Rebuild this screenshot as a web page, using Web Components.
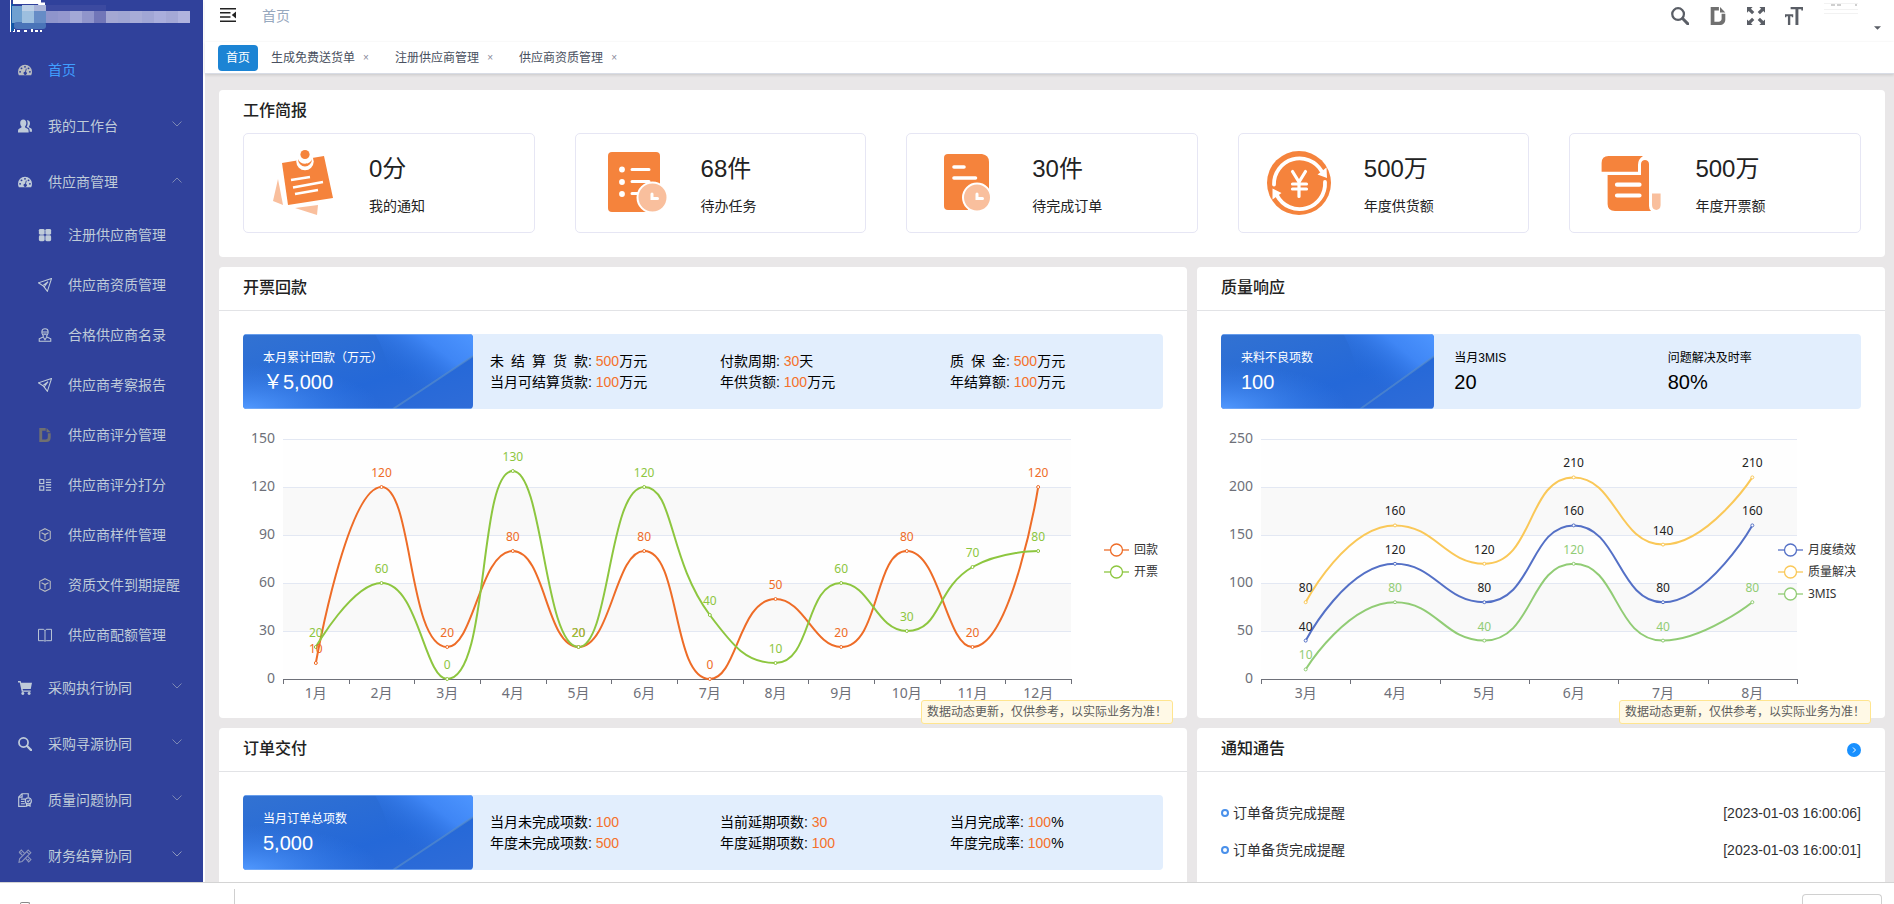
<!DOCTYPE html>
<html lang="zh-CN">
<head>
<meta charset="utf-8">
<title>首页</title>
<style>
  html, body { height: 100%; margin: 0; }
  body { font: 14px/20px "Liberation Sans", "Noto Sans CJK SC", sans-serif; color: #303133; overflow: hidden; }
</style>
</head>
<body>
<app-shell>
  <app-sidebar slot="side"></app-sidebar>
  <app-header slot="top"></app-header>
  <tag-bar slot="top"></tag-bar>

  <dash-card heading="工作简报" plain>
    <stat-grid>
      <stat-card icon="note" value="0分" label="我的通知"></stat-card>
      <stat-card icon="task" value="68件" label="待办任务"></stat-card>
      <stat-card icon="order" value="30件" label="待完成订单"></stat-card>
      <stat-card icon="coin" value="500万" label="年度供货额"></stat-card>
      <stat-card icon="bill" value="500万" label="年度开票额"></stat-card>
    </stat-grid>
  </dash-card>

  <dash-row>
    <dash-card heading="开票回款">
      <kpi-banner>
        <kpi-lead label="本月累计回款（万元）" value="￥5,000"></kpi-lead>
        <kpi-cell>
          <kpi-line label="未&#8194;结&#8194;算&#8194;货&#8194;款" value="500" unit="万元"></kpi-line>
          <kpi-line label="当月可结算货款" value="100" unit="万元"></kpi-line>
        </kpi-cell>
        <kpi-cell>
          <kpi-line label="付款周期" value="30" unit="天"></kpi-line>
          <kpi-line label="年供货额" value="100" unit="万元"></kpi-line>
        </kpi-cell>
        <kpi-cell>
          <kpi-line label="质&#8194;保&#8194;金" value="500" unit="万元"></kpi-line>
          <kpi-line label="年结算额" value="100" unit="万元"></kpi-line>
        </kpi-cell>
      </kpi-banner>
      <line-chart data-set="invoice"></line-chart>
      <hint-tag slot="hint">数据动态更新，仅供参考，以实际业务为准！</hint-tag>
    </dash-card>
    <dash-card heading="质量响应">
      <kpi-banner>
        <kpi-lead label="来料不良项数" value="100"></kpi-lead>
        <kpi-lead plain label="当月3MIS" value="20"></kpi-lead>
        <kpi-lead plain label="问题解决及时率" value="80%"></kpi-lead>
      </kpi-banner>
      <line-chart data-set="quality"></line-chart>
      <hint-tag slot="hint">数据动态更新，仅供参考，以实际业务为准！</hint-tag>
    </dash-card>
  </dash-row>

  <dash-row>
    <dash-card heading="订单交付">
      <kpi-banner>
        <kpi-lead label="当月订单总项数" value="5,000"></kpi-lead>
        <kpi-cell>
          <kpi-line label="当月未完成项数" value="100"></kpi-line>
          <kpi-line label="年度未完成项数" value="500"></kpi-line>
        </kpi-cell>
        <kpi-cell>
          <kpi-line label="当前延期项数" value="30"></kpi-line>
          <kpi-line label="年度延期项数" value="100"></kpi-line>
        </kpi-cell>
        <kpi-cell>
          <kpi-line label="当月完成率" value="100" unit="%"></kpi-line>
          <kpi-line label="年度完成率" value="100" unit="%"></kpi-line>
        </kpi-cell>
      </kpi-banner>
    </dash-card>
    <dash-card heading="通知通告" more>
      <notice-list>
        <notice-item time="2023-01-03 16:00:06">订单备货完成提醒</notice-item>
        <notice-item time="2023-01-03 16:00:01">订单备货完成提醒</notice-item>
      </notice-list>
    </dash-card>
  </dash-row>

  <app-footer slot="bottom"></app-footer>
</app-shell>

<script>
const define = (name, render, setup) => {
  customElements.define(name, class extends HTMLElement {
    connectedCallback() {
      if (this.shadowRoot) return;
      this.attachShadow({ mode: 'open' }).innerHTML = render(this);
      if (setup) setup(this);
    }
  });
};
const attr = (el, name) => el.getAttribute(name) || '';

/* Icon set. Each drawing uses currentColor. */
const ICONS = {
  dash: ['0 0 16 16', '<path fill="currentColor" fill-rule="evenodd" d="M8 2a8 8 0 0 0-8 8c0 1.500.4 2.900 1 4h14a8 8 0 0 0 1-4 8 8 0 0 0-8-8zM8 3.300a1.100 1.100 0 1 1 0 2.200 1.100 1.100 0 0 1 0-2.200zM4 5a1.100 1.100 0 1 1 0 2.200A1.100 1.100 0 0 1 4 5zm8 0a1.100 1.100 0 1 1 0 2.200A1.100 1.100 0 0 1 12 5zM2.400 9a1.100 1.100 0 1 1 0 2.200 1.100 1.100 0 0 1 0-2.200zm11.200 0a1.100 1.100 0 1 1 0 2.200 1.100 1.100 0 0 1 0-2.200zM9 6.400l1 .3-.9 3.500a1.800 1.800 0 1 1-1-.2z"/>'],
  people: ['0 0 16 16', '<path fill="currentColor" d="M6 0.500c2.200 0 3.500 1.600 3.500 4 0 1.700-.6 3-1.400 3.900v1.200L11 11c1 .6 1.200 1.300 1.200 4.500H0c0-3.200.2-3.900 1.200-4.500l2.700-1.400V8.400C3 7.500 2.500 6.200 2.500 4.500c0-2.400 1.300-4 3.500-4z"/><path fill="currentColor" d="M10 1.400c2.300-.3 3.700 1.200 3.700 3.500 0 1.500-.5 2.800-1.300 3.600v.9l2.400 1.200c1 .5 1.200 1.200 1.200 4h-2.600c0-2.800-.4-3.800-1.800-4.600L9.800 9c.8-1 1.200-2.500 1.200-4.300 0-1.300-.3-2.400-1-3.300z"/>'],
  grid: ['0 0 16 16', '<g fill="currentColor"><rect x="1" y="1" width="6.600" height="6.600" rx="1.700"/><rect x="8.400" y="1" width="6.600" height="6.600" rx="1.700"/><rect x="1" y="8.400" width="6.600" height="6.600" rx="1.700"/><rect x="8.400" y="8.400" width="6.600" height="6.600" rx="1.700"/></g>'],
  plane: ['0 0 16 16', '<path fill="none" stroke="currentColor" stroke-width="1.200" d="M15.500.5L.5 5.500l5 3.200 6-4.500-4.500 6 3.700 5z M5.500 8.700l1.500 1.500"/>'],
  badge: ['0 0 16 16', '<g fill="none" stroke="currentColor" stroke-width="1.200"><path d="M4.500 3.600C4.500 1.800 6 .8 8 .8s3.500 1 3.500 2.800v2.300L10 8.800v1.400l4.600 2.200v2.800H1.400v-2.800L6 10.200V8.800L4.500 5.900z"/><path d="M4.500 4.500h7M6.200 10.500L8 13.500l1.800-3M6 7h4"/></g>'],
  dee: ['0 0 16 16', '<path fill="currentColor" fill-rule="evenodd" d="M1.500 0h7.300v3H4.800v10h3.700c1.700 0 2.700-.8 2.700-2.500V6h3.300v5c0 3-2 5-5 5h-8z"/><path fill="currentColor" d="M9.800 0l4.700 4.900H9.800z"/>'],
  list: ['0 0 16 16', '<g fill="none" stroke="currentColor" stroke-width="1.300"><rect x="2" y="1.700" width="4.600" height="4.600"/><rect x="2" y="9.300" width="4.600" height="4.600"/><path d="M9 2h6M9 5h6M9 7.800h6M9 10.800h6M9 13.800h6"/></g>'],
  cube: ['0 0 16 16', '<path fill="none" stroke="currentColor" stroke-width="1.200" d="M8 .8l6 3v8.400l-6 3-6-3V3.800zM4 5.500l4 2 4-2M8 7.500v5"/>'],
  book: ['0 0 16 16', '<path fill="none" stroke="currentColor" stroke-width="1.100" d="M.6 1.500h5.900L8 3l1.500-1.500h5.900v13H9.500L8 15l-1.500-.5H.6zM8 2.500v12"/>'],
  cart: ['0 0 16 16', '<path fill="currentColor" d="M0 0h3l.6 2H16l-1.400 7.200H5.300l.4 1.600h8.800v1.400H4.300L2 1.600H0z"/><circle cx="5.500" cy="14.300" r="1.700" fill="currentColor"/><circle cx="12.700" cy="14.300" r="1.700" fill="currentColor"/>'],
  search: ['0 0 16 16', '<circle cx="6.300" cy="6.300" r="5.200" fill="none" stroke="currentColor" stroke-width="2"/><path d="M10.300 10.300L15 15" stroke="currentColor" stroke-width="2.600" stroke-linecap="round"/>'],
  check: ['0 0 16 16', '<g fill="none" stroke="currentColor" stroke-width="1.300"><path d="M9 15.300H.8V4.500L4.500.8h7.200v4M4.700 1v3.700H1M3.300 7h5M3.300 9.700h4M3.300 12.300h4.500"/><circle cx="11.800" cy="9" r="3.500"/><path d="M10.300 8.700l1.300 1.400 2-2.400M9.800 12v3l2-1 2 1v-3"/></g>'],
  tools: ['0 0 16 16', '<g fill="none" stroke="currentColor" stroke-width="1.200"><path d="M11.700 1.200l3 3L4.700 14.200l-3.600.9.700-3.900zM10 3l3 3M1.200 3.800L3.800 1.200l3.400 3.400M4 3.800l-1 1M4.800 7L1.200 3.800M9 11l3.200 3.700 2.600-2.600L11.300 8.700M11.300 12.600l1-1"/></g>'],
  fold: ['0 0 16 16', '<path fill="currentColor" d="M0 1h16v1.600H0zM0 5h10.500v1.600H0zM0 9.200h10.500v1.600H0zM0 13.400h16V15H0zM16 4.600v6.800L11.800 8z"/>'],
  full: ['0 0 16 16', '<path fill="currentColor" d="M0 0h5L3.500 1.500l3 3-2 2-3-3L0 5zM16 0v5l-1.500-1.500-3 3-2-2 3-3L11 0zM0 16v-5l1.500 1.500 3-3 2 2-3 3L5 16zM16 16h-5l1.500-1.500-3-3 2-2 3 3L16 11z"/>'],
  size: ['0 0 16 16', '<path fill="currentColor" d="M5 0h11v3h-1.500V2h-2.600v14H9.300V2H5zM0 6.500h7.300V9H6V8.300H4.700V16H2.600V8.300H1.200V9H0z"/>'],
  down: ['0 0 10 6', '<path fill="none" stroke="currentColor" d="M.5.5L5 5 9.500.5"/>'],
  up: ['0 0 10 6', '<path fill="none" stroke="currentColor" d="M.5 5.500L5 1l4.500 4.500"/>'],
  caret: ['0 0 8 4', '<path fill="currentColor" d="M0 0h8L4 4z"/>'],
  note: ['0 0 80 80', '<g fill="#f9bf9d"><path d="M14 36L9 58l10 4z"/><path d="M31 65l23-3-1 10z"/></g><path fill="#f5833c" d="M18 20l42-7 9 42-45 7z"/><circle cx="41" cy="18.500" r="8.700" fill="#fff"/><path fill="#f5833c" d="M34 16a7 7.500 0 0 0 14 0c-1.500 6-12 6.500-14 0z"/><circle cx="41" cy="11.500" r="4.600" fill="#f5833c"/><path d="M27 37l19-3M29 44.500L59 39M31 51l23-4" stroke="#fff" stroke-width="2.600"/>'],
  task: ['0 0 80 80', '<rect x="12" y="9" width="52" height="60" rx="4" fill="#f5833c"/><g fill="#fff"><circle cx="26" cy="26.500" r="2.900"/><circle cx="26" cy="39" r="2.900"/><circle cx="26" cy="51" r="2.900"/></g><path d="M36 26.500h17M36 38.500h17M36 50.500h8" stroke="#fff" stroke-width="3" stroke-linecap="round"/><circle cx="56.500" cy="54.500" r="15" fill="#f9bf9d" stroke="#fff" stroke-width="2"/><path d="M56 51v4.500h5.500" fill="none" stroke="#fff" stroke-width="3" stroke-linecap="round"/>'],
  order: ['0 0 80 80', '<path fill="#f5833c" d="M21 11h34q7 1 7 8v48H21q-4 0-4-4V15q0-4 4-4z"/><path d="M27 24h10M27 35h21.500" stroke="#fff" stroke-width="3.600" stroke-linecap="round"/><path fill="#fff" d="M50 54h14v14H40z"/><circle cx="50" cy="54.500" r="14" fill="#f9bf9d" stroke="#fff" stroke-width="2"/><path d="M50 51v4.500h5.500" fill="none" stroke="#fff" stroke-width="3" stroke-linecap="round"/>'],
  coin: ['0 0 80 80', '<circle cx="40" cy="40" r="32" fill="#f5833c"/><g fill="none" stroke="#fff" stroke-width="3.800" stroke-linecap="round"><path d="M15 41.500A25.500 25.500 0 0 1 62.500 28M66 39A25.500 25.500 0 0 1 18 52.500"/></g><path fill="#fff" d="M67.500 24.500l.5 10.500-9.500-3.500zM13.500 56.500V45.500l9 4.500z"/><path d="M33.500 28.500L40 39l6.500-10.500M40 39v14.500M33.500 41h14M33.500 46h14" fill="none" stroke="#fff" stroke-width="3.200" stroke-linecap="round"/>'],
  bill: ['0 0 80 80', '<path fill="#f5833c" d="M11.600 28.700V20q0-7 7-7H53q-5 3-5 9v6.700z"/><path fill="#f5833c" d="M17.600 32H51V21c0-5.500 8-5.500 8 0v42q0 3 2 5H25q-7.400 0-7.400-7z"/><path d="M27 41.700h22.500M27 52.500h22.500" stroke="#fff" stroke-width="4.200" stroke-linecap="round"/><path fill="#f9bf9d" d="M62 50.500h8.600V62c0 6.500-8.600 6.500-8.600 0z"/>']
};
const icon = (name, w, h = w) =>
  `<svg width="${w}" height="${h}" viewBox="${ICONS[name][0]}" aria-hidden="true">${ICONS[name][1]}</svg>`;

define('app-shell', () => `
  <style>
    :host { display: flex; flex-direction: column; height: 100vh; }
    .work { flex: 1; min-height: 0; display: flex; overflow: hidden; }
    .page { flex: 1; min-width: 0; display: flex; flex-direction: column; margin-left: 2px; }
    main { flex: 1; min-height: 0; overflow: hidden; background: #e9e7e8; padding: 16px 9px 0 14px; display: flex; flex-direction: column; gap: 10px; }
  </style>
  <div class="work">
    <slot name="side"></slot>
    <div class="page"><slot name="top"></slot><main><slot></slot></main></div>
  </div>
  <slot name="bottom"></slot>`);

define('app-sidebar', () => {
  const tones = ['#8f95cc', '#9498ce', '#a3a8d6', '#9095cb', '#7176b8', '#a4a8d3', '#a0a6d3', '#a8acd7', '#a1a6d5', '#aaaedc', '#a4a8d6', '#b0b3de'];
  const mosaic = tones.map((c, i) => `<rect x="${46 + i * 12}" y="11" width="12" height="12" fill="${c}"/>`).join('');
  return `
  <style>
    :host { display: flex; flex-direction: column; flex: none; width: 203px; background: #30419b; overflow: hidden; }
    .logo { display: block; flex: none; height: 42px; }
    nav { display: flex; flex: none; flex-direction: column; }
  </style>
  <svg class="logo" width="203" height="42" viewBox="0 0 203 42" role="img" aria-label="logo">
    <path fill="#fff" d="M10 0h1v32h-1zM13 0h28v4H13zM13 29h2v3h-2zM17 30h3v2h-3zM24 30h3v2h-3zM31 29h2v3h-2zM35 30h3v2h-3zM40 30h2v2h-2z"/>
    <rect x="11" y="4" width="3" height="27" fill="#1257a6"/>
    <rect x="12" y="6" width="10" height="17" fill="#6fa0d0"/><rect x="14" y="22" width="32" height="7" rx="3" fill="#4a74b8"/>
    <rect x="22" y="5" width="12" height="7" fill="#bdd0e6"/><rect x="22" y="11" width="12" height="12" fill="#9dbfdf"/>
    <rect x="34" y="5" width="12" height="6" fill="#a9b4d8"/><rect x="34" y="11" width="12" height="12" fill="#668cc6"/>
    <path fill="#fff" d="M38 5q0-3 3-2.500h4V5z"/>
    <rect x="46" y="5" width="60" height="6" fill="#3c4aa0"/>
    ${mosaic}
  </svg>
  <nav>
    <nav-item icon="dash" active>首页</nav-item>
    <nav-item icon="people" arrow="down">我的工作台</nav-item>
    <nav-item icon="dash" arrow="up">供应商管理</nav-item>
    <nav-item sub icon="grid">注册供应商管理</nav-item>
    <nav-item sub icon="plane">供应商资质管理</nav-item>
    <nav-item sub icon="badge">合格供应商名录</nav-item>
    <nav-item sub icon="plane">供应商考察报告</nav-item>
    <nav-item sub icon="dee">供应商评分管理</nav-item>
    <nav-item sub icon="list">供应商评分打分</nav-item>
    <nav-item sub icon="cube">供应商样件管理</nav-item>
    <nav-item sub icon="cube">资质文件到期提醒</nav-item>
    <nav-item sub icon="book">供应商配额管理</nav-item>
    <nav-item icon="cart" arrow="down">采购执行协同</nav-item>
    <nav-item icon="search" arrow="down">采购寻源协同</nav-item>
    <nav-item icon="check" arrow="down">质量问题协同</nav-item>
    <nav-item icon="tools" arrow="down">财务结算协同</nav-item>
  </nav>`;
});

define('nav-item', el => {
  const arrow = attr(el, 'arrow');
  const inner = `${icon(attr(el, 'icon'), 14)}<span><slot></slot></span>${arrow ? icon(arrow, 10, 6) : ''}`;
  return `
  <style>
    :host { display: block; }
    a, button { box-sizing: border-box; display: flex; align-items: center; gap: 16px; width: 100%; height: 56px; padding: 0 21px 0 18px; border: 0; background: none; font: inherit; line-height: 20px; text-align: left; text-decoration: none; color: #bfcbd9; cursor: pointer; }
    :host([sub]) a { height: 50px; padding-left: 38px; }
    :host([active]) span { color: #409eff; }
    :host([active]) svg, :host([icon="cube"]) svg { color: #b9bcc0; }
    :host([icon="dee"]) svg { color: #707070; }
    :host([icon="tools"]) svg { color: #8d97bd; }
    span { flex: 1; white-space: nowrap; }
    span + svg { color: #7c88b4; margin-bottom: 4px; }
  </style>
  ${arrow ? `<button type="button" aria-expanded="${arrow === 'up'}">${inner}</button>` : `<a href="#">${inner}</a>`}`;
});

define('app-header', () => `
  <style>
    :host { display: flex; align-items: center; flex: none; height: 28px; padding: 0 13px 14px 15px; background: #fff; box-shadow: 0 1px 4px rgba(0,21,41,.08); position: relative; }
    button { border: 0; padding: 0; background: none; display: flex; color: #5a5e66; cursor: pointer; }
    .fold { color: #222; margin-top: 2px; }
    nav { flex: 1; margin: 4px 0 0 26px; color: #97a8be; }
    .tools { display: flex; align-items: center; gap: 20px; padding-top: 4px; }
    .dee { color: #707070; }
    .user { gap: 15px; align-items: flex-end; }
    .user svg:last-child { margin-bottom: -1px; }
  </style>
  <button class="fold" type="button" aria-label="收起菜单">${icon('fold', 16)}</button>
  <nav>首页</nav>
  <div class="tools">
    <button type="button" aria-label="搜索">${icon('search', 18)}</button>
    <button type="button" class="dee" aria-label="文档">${icon('dee', 18)}</button>
    <button type="button" aria-label="全屏">${icon('full', 18)}</button>
    <button type="button" aria-label="字号">${icon('size', 18)}</button>
    <button type="button" class="user" aria-label="用户"><svg width="36" height="26" viewBox="0 0 36 26"><path stroke="#f2f2f2" d="M1 .5h34M1 6.500h34M1 10.500h34"/><path stroke="#cfcfcf" stroke-width="2" d="M8 2h4M14 2h4M32 2h2"/></svg>${icon('caret', 7, 4)}</button>
  </div>`);

define('tag-bar', () => {
  const tabs = ['生成免费送货单', '注册供应商管理', '供应商资质管理'];
  return `
  <style>
    :host { display: flex; align-items: center; flex: none; gap: 5px; height: 31px; padding-left: 13px; background: #fff; border-bottom: 1px solid #d8dce5; box-shadow: 0 1px 3px rgba(0,0,0,.14); font-size: 12px; position: relative; }
    div { display: flex; align-items: center; height: 26px; padding: 0 8px; border-radius: 4px; }
    a { color: #495060; text-decoration: none; }
    .on { background: #1c84d4; }
    .on a { color: #fff; }
    button { width: 16px; margin: 0 0 0 3px; padding: 0; border: 0; background: none; font: inherit; font-size: 10px; color: #889; cursor: pointer; }
  </style>
  <div class="on"><a href="#">首页</a></div>
  ${tabs.map(t => `<div><a href="#">${t}</a><button type="button" aria-label="关闭">×</button></div>`).join('')}`;
});

define('dash-row', () => `
  <style>
    :host { display: grid; flex: none; grid-template-columns: minmax(0, 121fr) minmax(0, 86fr); gap: 10px; }
  </style><slot></slot>`);

define('dash-card', el => `
  <style>
    :host { display: block; flex: none; position: relative; background: #fff; border-radius: 4px; }
    header { display: flex; align-items: center; justify-content: space-between; height: 43px; padding: 0 24px; border-bottom: 1px solid #e2e3e6; }
    h2 { margin: 0 0 1px; font-size: 16px; line-height: 24px; font-weight: 500; color: #222; }
    section { padding: 23px 24px 0; }
    :host([plain]) header { border-bottom: 0; }
    :host([plain]) section { padding: 0 24px 24px; }
    a { display: flex; width: 14px; height: 14px; border-radius: 50%; background: #1890ff; align-items: center; justify-content: center; }
  </style>
  <header><h2>${attr(el, 'heading')}</h2>${el.hasAttribute('more') ? '<a href="#" aria-label="更多"><svg width="6" height="6" viewBox="0 0 6 6"><path d="M2 .5L4.500 3 2 5.500" fill="none" stroke="#fff"/></svg></a>' : ''}</header>
  <section><slot></slot></section>
  <slot name="hint"></slot>`);

define('stat-grid', () => `
  <style>
    :host { display: grid; grid-template-columns: repeat(5, minmax(0, 1fr)); gap: 40px; }
  </style><slot></slot>`);

define('stat-card', el => `
  <style>
    :host { box-sizing: border-box; display: flex; align-items: center; gap: 25px; height: 100px; padding-left: 20px; border: 1px solid #e6e6f4; border-radius: 5px; }
    svg { flex: none; }
    div { display: flex; flex-direction: column; gap: 9px; padding-top: 5px; white-space: nowrap; }
    strong { font-size: 24px; line-height: 32px; font-weight: 400; color: #222; }
    span { line-height: 24px; color: #222; }
  </style>
  ${icon(attr(el, 'icon'), 80)}
  <div><strong>${attr(el, 'value')}</strong><span>${attr(el, 'label')}</span></div>`);

define('kpi-banner', () => `
  <style>
    :host { display: grid; grid-auto-flow: column; grid-auto-columns: minmax(0, 1fr); height: 75px; background: #e2eefd; border-radius: 4px; color: #000; }
  </style><slot></slot>`);

define('kpi-lead', el => `
  <style>
    :host { display: flex; flex-direction: column; justify-content: center; position: relative; overflow: hidden; padding: 0 0 3px 20px; border-radius: 4px; line-height: 24px; color: #fff; white-space: nowrap; }
    :host([plain]) { color: #000; }
    svg { position: absolute; inset: 0; width: 100%; height: 100%; z-index: 0; }
    span, strong { position: relative; }
    span { font-size: 12px; }
    strong { font-size: 20px; font-weight: 400; }
  </style>
  ${el.hasAttribute('plain') ? '' : `<svg viewBox="0 0 230 75" preserveAspectRatio="none" aria-hidden="true">
    <defs>
      <linearGradient id="a" x1="0" y1="0" x2="1" y2="1"><stop offset="0" stop-color="#3272d2"/><stop offset=".6" stop-color="#2468d8"/><stop offset="1" stop-color="#2f6cd8"/></linearGradient>
      <radialGradient id="b" cx="0" cy="1" r=".6"><stop offset="0" stop-color="#5199ff"/><stop offset="1" stop-color="#3b80ea" stop-opacity="0"/></radialGradient>
      <linearGradient id="c" x1="1" y1="0" x2=".3" y2=".7"><stop offset="0" stop-color="#4d95ff"/><stop offset=".4" stop-color="#3f86f5"/><stop offset="1" stop-color="#2468d8" stop-opacity="0"/></linearGradient>
    </defs>
    <path fill="url(#a)" d="M0 0h230v75H0z"/><path fill="url(#b)" d="M0 0h230v75H0z"/>
    <path fill="url(#c)" d="M132 0h98v22l-80 53q0-45-18-75z"/>
    <path stroke="#5b8fc8" stroke-opacity=".6" stroke-width="2" d="M150 75l80-53"/>
    <path fill="none" stroke="#7fb1f7" stroke-opacity=".7" d="M0 .5h230M0 74.500h230"/>
  </svg>`}
  <span>${attr(el, 'label')}</span><strong>${attr(el, 'value')}</strong>`);

define('kpi-cell', () => `
  <style>
    :host { display: flex; flex-direction: column; justify-content: center; padding-left: 17px; }
  </style><slot></slot>`);

define('kpi-line', el => `
  <style>
    :host { display: block; line-height: 21px; white-space: nowrap; }
    b { font-weight: 400; color: #f5702a; }
  </style>${attr(el, 'label')}: <b>${attr(el, 'value')}</b>${attr(el, 'unit')}`);

define('hint-tag', () => `
  <style>
    :host { position: absolute; right: 14px; bottom: -6px; box-sizing: border-box; height: 24px; padding: 0 0 0 5px; width: 252px; border: 1px solid #ffe58f; border-radius: 3px; background: #fff9e6; font-size: 12px; line-height: 22px; color: #5c5c5c; white-space: nowrap; z-index: 1; }
  </style><slot></slot>`);

define('notice-list', () => `
  <style>
    :host { display: flex; flex-direction: column; gap: 17px; padding: 8px 0 37px; }
  </style><slot></slot>`);

define('notice-item', el => `
  <style>
    :host { display: flex; align-items: center; line-height: 20px; }
    i { box-sizing: border-box; width: 8px; height: 8px; margin-right: 4px; border: 2px solid #4a90ea; border-radius: 50%; }
    a { flex: 1; color: #303133; text-decoration: none; }
  </style>
  <i></i><a href="#"><slot></slot></a><time>[${attr(el, 'time')}]</time>`);

define('app-footer', () => `
  <style>
    :host { display: flex; flex: none; align-items: flex-end; height: 21px; border-top: 1px solid #d4d4d4; background: #fff; overflow: hidden; }
    i { width: 8px; height: 1px; margin-left: 20px; border: 1px solid #888; border-bottom: 0; border-radius: 2px 2px 0 0; }
    b { width: 1px; height: 15px; margin-left: 204px; background: #cfcfcf; }
    button { box-sizing: border-box; width: 80px; height: 10px; margin: 0 12px 0 auto; border: 1px solid #d0d0d0; border-bottom: 0; border-radius: 4px 4px 0 0; background: #fff; }
  </style>
  <i></i><b></b><button type="button" aria-label="全部显示"></button>`);

/* Smoothed line charts, redrawn whenever their width changes. */
const DATASETS = {
  invoice: {
    max: 150, step: 30, right: 92, textWidth: 24,
    months: [1, 2, 3, 4, 5, 6, 7, 8, 9, 10, 11, 12],
    series: [
      { name: '回款', color: '#ee6c27', label: '#ee6c27', data: [10, 120, 20, 80, 20, 80, 0, 50, 20, 80, 20, 120] },
      { name: '开票', color: '#8dc63f', label: '#8dc63f', data: [20, 60, 0, 130, 20, 120, 40, 10, 60, 30, 70, 80] }
    ]
  },
  quality: {
    max: 250, step: 50, right: 64, textWidth: 48,
    months: [3, 4, 5, 6, 7, 8],
    series: [
      { name: '月度绩效', color: '#5470c6', label: '#222', data: [40, 120, 80, 160, 80, 160] },
      { name: '质量解决', color: '#fac858', label: '#222', data: [80, 160, 120, 210, 140, 210] },
      { name: '3MIS', color: '#91cc75', label: '#91cc75', data: [10, 80, 40, 120, 40, 80] }
    ]
  }
};

const clamp = (v, a, b) => Math.max(Math.min(a, b), Math.min(Math.max(a, b), v));
function smoothPath(pts) {
  let d = `M${pts[0][0]} ${pts[0][1]}`;
  let c0 = pts[0];
  for (let i = 1; i < pts.length; i++) {
    const p = pts[i], prev = pts[i - 1], next = pts[i + 1];
    let c1 = p, n0 = p;
    if (next) {
      const lp = Math.hypot(p[0] - prev[0], p[1] - prev[1]);
      const ln = Math.hypot(next[0] - p[0], next[1] - p[1]);
      const k = 0.5 * ln / (ln + lp);
      n0 = [0, 1].map(a => clamp(p[a] + (next[a] - prev[a]) * k, p[a], next[a]));
      c1 = [0, 1].map(a => clamp(p[a] - (n0[a] - p[a]) * lp / ln, prev[a], p[a]));
      n0 = [0, 1].map(a => p[a] + (p[a] - c1[a]) * ln / lp);
    }
    d += `C${[...c0, ...c1, ...p].map(v => v.toFixed(1)).join(' ')}`;
    c0 = n0;
  }
  return d;
}

function drawChart(el) {
  const cfg = DATASETS[el.dataset.set];
  const W = el.clientWidth, L = 40, R = W - cfg.right, T = 30, B = 270;
  const y = v => B - (B - T) * v / cfg.max;
  const band = (R - L) / cfg.months.length;
  const x = i => L + band * (i + 0.5);
  const out = [];
  for (let v = 0, i = 0; v < cfg.max; v += cfg.step, i++)
    out.push(`<rect x="${L}" y="${y(v + cfg.step)}" width="${R - L}" height="${y(v) - y(v + cfg.step)}" fill="${i % 2 ? '#f9f9f9' : '#fefefe'}"/>`);
  for (let v = 0; v <= cfg.max; v += cfg.step) {
    if (v) out.push(`<path d="M${L} ${y(v) + .5}H${R}" stroke="#e3e8f3"/>`);
    out.push(`<text class="axis" text-anchor="end" x="${L - 8}" y="${y(v) + 4}">${v}</text>`);
  }
  out.push(`<path d="M${L} ${B + .5}H${R}" stroke="#6e7079"/>`);
  for (let i = 0; i <= cfg.months.length; i++)
    out.push(`<path d="M${Math.round(L + band * i) + .5} ${B}v5" stroke="#6e7079"/>`);
  cfg.months.forEach((m, i) => out.push(`<text class="axis" text-anchor="middle" x="${x(i)}" y="${B + 19}">${m}月</text>`));
  const labels = [];
  cfg.series.forEach(s => {
    const pts = s.data.map((v, i) => [x(i), y(v)]);
    out.push(`<path d="${smoothPath(pts)}" fill="none" stroke="${s.color}" stroke-width="2"/>`);
    pts.forEach((p, i) => {
      out.push(`<circle cx="${p[0]}" cy="${p[1]}" r="1.500" fill="#fff" stroke="${s.color}"/>`);
      labels.push(`<text text-anchor="middle" x="${p[0]}" y="${p[1] - 10}" fill="${s.label}">${s.data[i]}</text>`);
    });
  });
  out.push(...labels);
  const tx = W - 5 - cfg.textWidth;
  cfg.series.forEach((s, i) => {
    const ly = 141 + i * 22;
    out.push(`<path d="M${tx - 30} ${ly}h25" stroke="${s.color}" stroke-width="1.500" opacity=".85"/><circle cx="${tx - 17.5}" cy="${ly}" r="6" fill="#fff" stroke="${s.color}" stroke-width="1.300"/>`);
    out.push(`<text x="${tx}" y="${ly + 4}" fill="#333">${s.name}</text>`);
  });
  el.shadowRoot.querySelector('svg').innerHTML = out.join('');
}

define('line-chart', () => `
  <style>
    :host { display: block; height: 309px; }
    svg { display: block; width: 100%; height: 100%; font: 12px "Noto Sans", "Noto Sans CJK SC", sans-serif; }
    .axis { font-size: 14px; fill: #6e7079; }
  </style><svg role="img" aria-label="折线图"></svg>`,
  el => { drawChart(el); new ResizeObserver(() => drawChart(el)).observe(el); });
</script>
</body>
</html>
